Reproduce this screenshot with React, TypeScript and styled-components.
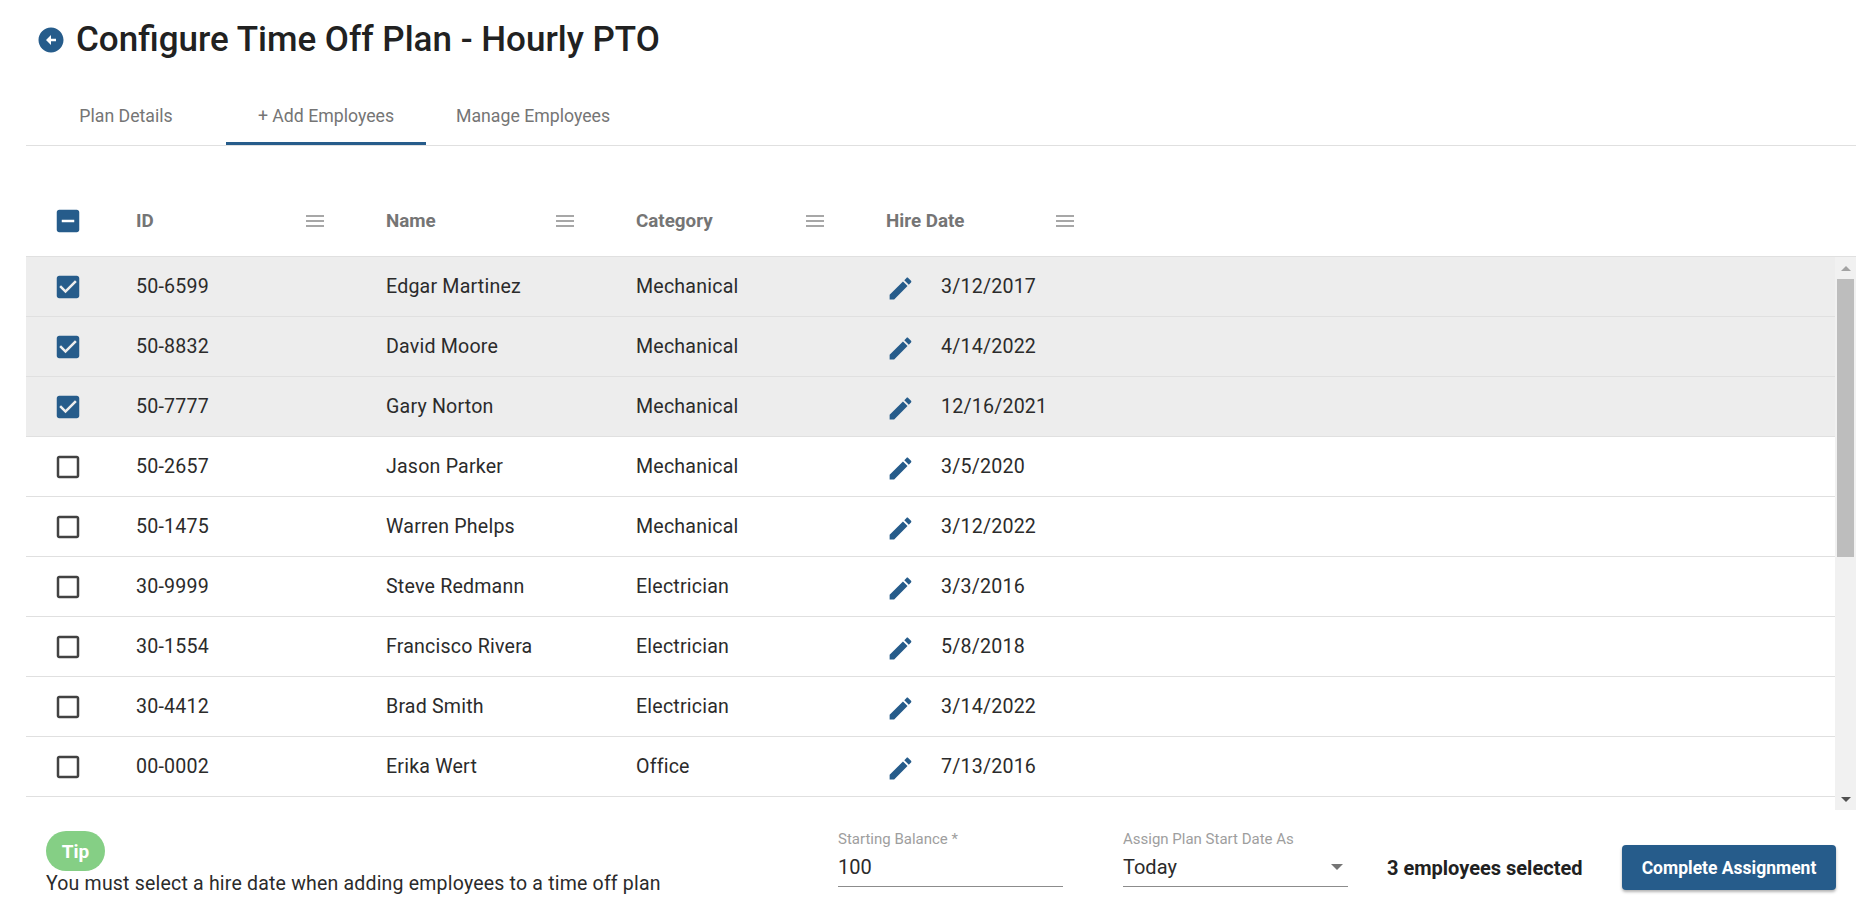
import React from "react"
import styled, { createGlobalStyle } from "styled-components"

const PRIMARY = "#265c8b"

const GlobalStyle = createGlobalStyle`
  html, body {
    margin: 0;
    padding: 0;
    background: #fff;
    font-family: Roboto, "Liberation Sans", sans-serif;
    color: #212121;
  }
`

const Page = styled.div`
  width: 1871px;
  height: 912px;
  box-sizing: border-box;
  padding: 0 15px 0 26px;
  overflow: hidden;
`

const TitleRow = styled.div`
  height: 85px;
  padding: 0 0 6px 10px;
  box-sizing: border-box;
  display: flex;
  align-items: center;
  gap: 10px;
`

const Title = styled.h1`
  margin: 0;
  font-size: 35px;
  font-weight: 500;
  line-height: 40px;
  color: #212121;
`

const TabBar = styled.div`
  height: 61px;
  box-sizing: border-box;
  display: flex;
  border-bottom: 1px solid #e0e0e0;
`

const Tab = styled.div<{ $active?: boolean }>`
  min-width: 200px;
  box-sizing: border-box;
  padding: 4px 30px 0;
  height: 60px;
  display: flex;
  align-items: center;
  justify-content: center;
  font-size: 17.7px;
  font-weight: 400;
  color: #757575;
  border-bottom: 3px solid ${p => (p.$active ? PRIMARY : "transparent")};
`

const HeaderRow = styled.div`
  margin-top: 41px;
  height: 70px;
  padding-bottom: 1px;
  display: flex;
  align-items: center;
  box-sizing: border-box;
  border-bottom: 1px solid #e0e0e0;
`

const CheckCell = styled.div`
  width: 90px;
  padding-left: 27px;
  box-sizing: border-box;
  display: flex;
  align-items: center;
`

const HeaderCell = styled.div`
  width: 250px;
  box-sizing: border-box;
  padding: 0 42px 0 20px;
  display: flex;
  align-items: center;
  justify-content: space-between;
  font-size: 18.8px;
  font-weight: 700;
  color: #757575;
`

const TableBody = styled.div`
  height: 553px;
  display: flex;
`

const Rows = styled.div`
  flex: 1;
  min-width: 0;
  overflow: hidden;
`

const Row = styled.div<{ $selected?: boolean }>`
  height: 60px;
  box-sizing: border-box;
  display: flex;
  align-items: center;
  border-bottom: 1px solid #e0e0e0;
  background: ${p => (p.$selected ? "#ededed" : "#fff")};
`

const Cell = styled.div`
  width: 250px;
  box-sizing: border-box;
  padding-left: 20px;
  font-size: 19.6px;
  letter-spacing: 0.2px;
  color: #2b2b2b;
`

const DateCell = styled(Cell)`
  display: flex;
  align-items: center;
  gap: 26px;
`

const EditIcon = styled.svg`
  width: 29px;
  height: 29px;
  margin-top: 4px;
  fill: ${PRIMARY};
  flex: none;
`

const Scrollbar = styled.div`
  width: 21px;
  background: #f1f1f1;
  display: flex;
  flex-direction: column;
  align-items: center;
`

const ArrowButton = styled.div<{ $down?: boolean }>`
  height: 22px;
  flex: none;
  display: flex;
  align-items: center;
  justify-content: center;
  &::before {
    content: "";
    width: 0;
    height: 0;
    border-left: 5px solid transparent;
    border-right: 5px solid transparent;
    ${p =>
      p.$down
        ? "border-top: 5px solid #505050;"
        : "border-bottom: 5px solid #a3a3a3;"}
  }
`

const Thumb = styled.div`
  width: 17px;
  height: 278px;
  flex: none;
  background: #bdbdbd;
`

const TrackSpace = styled.div`
  flex: 1;
`

const Footer = styled.div`
  display: flex;
  padding-left: 20px;
  height: 102px;
`

const TipBlock = styled.div`
  padding-top: 21px;
  flex: 1;
`

const TipBadge = styled.div`
  width: 59px;
  height: 40px;
  border-radius: 20px;
  background: #85cf85;
  color: #fff;
  font-size: 19px;
  font-weight: 700;
  display: flex;
  align-items: center;
  justify-content: center;
`

const TipText = styled.div`
  font-size: 19.5px;
  letter-spacing: 0.2px;
  line-height: 26px;
  color: #2b2b2b;
`

const Field = styled.div`
  width: 225px;
  margin-right: 60px;
  padding-top: 20px;
  box-sizing: border-box;
`

const FieldLabel = styled.div`
  font-size: 15px;
  line-height: 18px;
  color: #9e9e9e;
`

const FieldValue = styled.div`
  height: 39px;
  box-sizing: border-box;
  border-bottom: 1px solid #8c8c8c;
  display: flex;
  align-items: center;
  justify-content: space-between;
  padding-bottom: 1px;
  font-size: 20px;
  color: #2b2b2b;
`

const SelectArrow = styled.span`
  width: 0;
  height: 0;
  margin-right: 5px;
  border-left: 6px solid transparent;
  border-right: 6px solid transparent;
  border-top: 6px solid #757575;
`

const SelectedCount = styled.div`
  margin-left: -21px;
  width: 235px;
  padding-top: 44px;
  font-size: 20px;
  line-height: 28px;
  font-weight: 700;
  color: #212121;
`

const CompleteButton = styled.button`
  width: 214px;
  height: 45px;
  margin: 35px 20px 0 0;
  padding: 0;
  border: 0;
  border-radius: 4px;
  background: ${PRIMARY};
  color: #fff;
  font-family: inherit;
  font-size: 17.5px;
  font-weight: 700;
  box-shadow: 0 2px 3px rgba(0, 0, 0, 0.3);
`

const HeaderMenu = styled.svg`
  width: 18px;
  height: 12px;
  stroke: #8a8a8a;
  stroke-width: 1.4;
  fill: none;
  flex: none;
`

const BackIcon = () => (
  <svg width="30" height="30" viewBox="0 0 24 24" fill={PRIMARY}>
    <path d="M2 12c0 5.52 4.48 10 10 10s10-4.48 10-10S17.52 2 12 2 2 6.48 2 12zm10-1h4v2h-4v3l-4-4 4-4v3z" />
  </svg>
)

const checkPaths = {
  checked:
    "M19 3H5c-1.11 0-2 .9-2 2v14c0 1.1.89 2 2 2h14c1.11 0 2-.9 2-2V5c0-1.1-.89-2-2-2zm-9 14l-5-5 1.41-1.41L10 14.17l7.59-7.59L19 8l-9 9z",
  mixed:
    "M19 3H5c-1.1 0-2 .9-2 2v14c0 1.1.9 2 2 2h14c1.1 0 2-.9 2-2V5c0-1.1-.9-2-2-2zm-2 10H7v-2h10v2z",
  empty:
    "M19 5v14H5V5h14m0-2H5c-1.1 0-2 .9-2 2v14c0 1.1.9 2 2 2h14c1.1 0 2-.9 2-2V5c0-1.1-.9-2-2-2z",
}

const CheckIcon = ({ state }: { state: keyof typeof checkPaths }) => (
  <svg
    width="30"
    height="30"
    viewBox="0 0 24 24"
    fill={state === "empty" ? "#424242" : PRIMARY}
  >
    <path d={checkPaths[state]} />
  </svg>
)

const employees = [
  { id: "50-6599", name: "Edgar Martinez", category: "Mechanical", date: "3/12/2017", selected: true },
  { id: "50-8832", name: "David Moore", category: "Mechanical", date: "4/14/2022", selected: true },
  { id: "50-7777", name: "Gary Norton", category: "Mechanical", date: "12/16/2021", selected: true },
  { id: "50-2657", name: "Jason Parker", category: "Mechanical", date: "3/5/2020" },
  { id: "50-1475", name: "Warren Phelps", category: "Mechanical", date: "3/12/2022" },
  { id: "30-9999", name: "Steve Redmann", category: "Electrician", date: "3/3/2016" },
  { id: "30-1554", name: "Francisco Rivera", category: "Electrician", date: "5/8/2018" },
  { id: "30-4412", name: "Brad Smith", category: "Electrician", date: "3/14/2022" },
  { id: "00-0002", name: "Erika Wert", category: "Office", date: "7/13/2016" },
]

const columns = ["ID", "Name", "Category", "Hire Date"]

export default function App() {
  return (
    <Page>
      <GlobalStyle />
      <TitleRow>
        <BackIcon />
        <Title>Configure Time Off Plan - Hourly PTO</Title>
      </TitleRow>
      <TabBar>
        <Tab>Plan Details</Tab>
        <Tab $active>+ Add Employees</Tab>
        <Tab>Manage Employees</Tab>
      </TabBar>
      <HeaderRow>
        <CheckCell>
          <CheckIcon state="mixed" />
        </CheckCell>
        {columns.map(c => (
          <HeaderCell key={c}>
            {c}
            <HeaderMenu viewBox="0 0 18 12">
              <path d="M0 1h18M0 6h18M0 11h18" />
            </HeaderMenu>
          </HeaderCell>
        ))}
      </HeaderRow>
      <TableBody>
        <Rows>
          {employees.map(e => (
            <Row key={e.id} $selected={e.selected}>
              <CheckCell>
                <CheckIcon state={e.selected ? "checked" : "empty"} />
              </CheckCell>
              <Cell>{e.id}</Cell>
              <Cell>{e.name}</Cell>
              <Cell>{e.category}</Cell>
              <DateCell>
                <EditIcon viewBox="0 0 24 24">
                  <path d="M3 17.25V21h3.75L17.81 9.94l-3.75-3.75L3 17.25zM20.71 7.04c.39-.39.39-1.02 0-1.41l-2.34-2.34c-.39-.39-1.02-.39-1.41 0l-1.83 1.83 3.75 3.75 1.83-1.83z" />
                </EditIcon>
                {e.date}
              </DateCell>
            </Row>
          ))}
        </Rows>
        <Scrollbar>
          <ArrowButton />
          <Thumb />
          <TrackSpace />
          <ArrowButton $down />
        </Scrollbar>
      </TableBody>
      <Footer>
        <TipBlock>
          <TipBadge>Tip</TipBadge>
          <TipText>You must select a hire date when adding employees to a time off plan</TipText>
        </TipBlock>
        <Field>
          <FieldLabel>Starting Balance *</FieldLabel>
          <FieldValue>100</FieldValue>
        </Field>
        <Field>
          <FieldLabel>Assign Plan Start Date As</FieldLabel>
          <FieldValue>
            Today
            <SelectArrow />
          </FieldValue>
        </Field>
        <SelectedCount>3 employees selected</SelectedCount>
        <CompleteButton>Complete Assignment</CompleteButton>
      </Footer>
    </Page>
  )
}
